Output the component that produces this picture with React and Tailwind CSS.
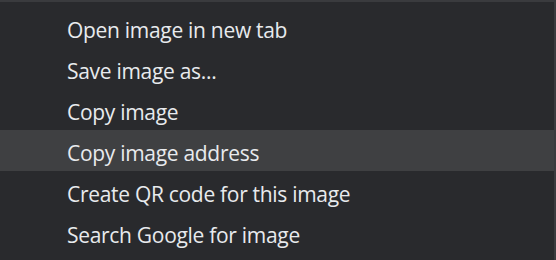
export default function App() {
  const items = [
    "Open image in new tab",
    "Save image as...",
    "Copy image",
    "Copy image address",
    "Create QR code for this image",
    "Search Google for image",
  ];
  return (
    <div className="w-[556px] h-[260px] bg-[#292a2d] border-t-2 border-t-[#3a3b3e] border-r-2 border-r-[#3a3b3e] pt-[5px] text-[#e8eaed] overflow-hidden" style={{ fontFamily: '"Open Sans", sans-serif' }}>
      {items.map((t, i) => (
        <div key={i} className={`h-[41px] flex items-center pt-[6px] pl-[67px] text-[21px] tracking-[-0.3px] ${i === 3 ? "bg-[#3f4042]" : ""}`}>
          {t}
        </div>
      ))}
    </div>
  );
}
